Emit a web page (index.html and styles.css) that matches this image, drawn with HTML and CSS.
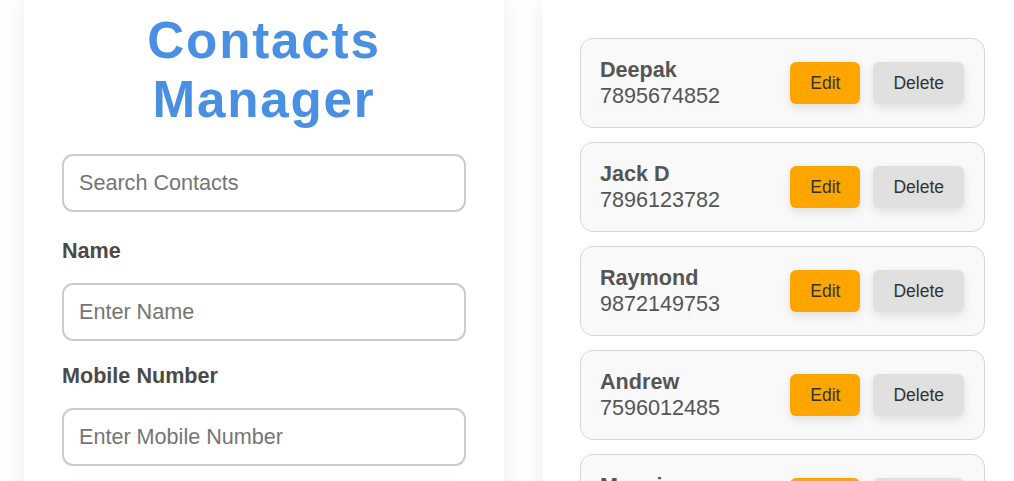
FILE: index.html
```html
<!DOCTYPE html>
<html lang="en">
<head>
<meta charset="UTF-8">
<title>Contacts Manager</title>
<link rel="stylesheet" href="styles.css">
</head>
<body>
<div class="layout">
  <section class="panel form-panel">
    <h1 class="title">Contacts Manager</h1>
    <input class="field search" type="text" placeholder="Search Contacts">
    <label class="label" for="name">Name</label>
    <input class="field" id="name" type="text" placeholder="Enter Name">
    <label class="label" for="mobile">Mobile Number</label>
    <input class="field" id="mobile" type="text" placeholder="Enter Mobile Number">
    <button class="add-btn">Add Contact</button>
  </section>
  <section class="panel list-panel">
    <div class="card">
      <div class="info"><div class="name">Deepak</div><div class="num">7895674852</div></div>
      <div class="actions"><button class="btn edit">Edit</button><button class="btn delete">Delete</button></div>
    </div>
    <div class="card">
      <div class="info"><div class="name">Jack D</div><div class="num">7896123782</div></div>
      <div class="actions"><button class="btn edit">Edit</button><button class="btn delete">Delete</button></div>
    </div>
    <div class="card">
      <div class="info"><div class="name">Raymond</div><div class="num">9872149753</div></div>
      <div class="actions"><button class="btn edit">Edit</button><button class="btn delete">Delete</button></div>
    </div>
    <div class="card">
      <div class="info"><div class="name">Andrew</div><div class="num">7596012485</div></div>
      <div class="actions"><button class="btn edit">Edit</button><button class="btn delete">Delete</button></div>
    </div>
    <div class="card">
      <div class="info"><div class="name">Manoj</div><div class="num">9876543210</div></div>
      <div class="actions"><button class="btn edit">Edit</button><button class="btn delete">Delete</button></div>
    </div>
  </section>
</div>
</body>
</html>
```

FILE: styles.css
```css
html, body {
  margin: 0;
  padding: 0;
  background: #ffffff;
  overflow: hidden;
  height: 100%;
}

body {
  font-family: "Liberation Sans", Arial, sans-serif;
}

.layout {
  display: flex;
  gap: 38px;
  padding-left: 24px;
  align-items: flex-start;
}

.panel {
  flex: 0 0 480px;
  width: 480px;
  box-sizing: border-box;
  background: #ffffff;
  box-shadow: 0 0 24px rgba(0, 0, 0, 0.08);
  min-height: 700px;
}

.form-panel {
  padding: 11px 38px 40px;
  display: flex;
  flex-direction: column;
}

.title {
  margin: 0 0 25px;
  font-size: 51.2px;
  font-weight: bold;
  line-height: normal;
  letter-spacing: 1.8px;
  color: #4a90e2;
  text-align: center;
}

.field {
  display: block;
  width: 100%;
  box-sizing: border-box;
  height: 58px;
  padding: 0 15px;
  border: 2px solid #cccccc;
  border-radius: 11px;
  font-family: "Liberation Sans", Arial, sans-serif;
  font-size: 21.6px;
  color: #333;
  background: #fff;
  margin: 0 0 22px;
  outline: none;
}

.field::placeholder {
  color: #757575;
}

.search {
  margin-bottom: 26px;
}

.label {
  display: block;
  font-size: 21.6px;
  font-weight: bold;
  color: #4a4a4a;
  line-height: normal;
  margin-bottom: 19px;
}

.add-btn {
  margin-top: 0;
  height: 54px;
  border: none;
  border-radius: 11px;
  background: #ffffff;
  box-shadow: 0 0 14px rgba(0, 0, 0, 0.07);
  font-family: "Liberation Sans", Arial, sans-serif;
  font-size: 20px;
}

.list-panel {
  padding: 38px;
}

.card {
  display: flex;
  justify-content: space-between;
  align-items: center;
  padding: 18px 20px 18px 19px;
  border: 1px solid #d6d6d6;
  border-radius: 13px;
  background: #f9f9f9;
  margin-bottom: 14px;
  margin-right: -1px;
}

.name {
  font-size: 21.6px;
  font-weight: bold;
  color: #555555;
  line-height: normal;
}

.num {
  font-size: 21.6px;
  color: #555555;
  line-height: normal;
}

.actions {
  display: flex;
  gap: 13px;
}

.btn {
  font-family: "Liberation Sans", Arial, sans-serif;
  font-size: 17.5px;
  line-height: normal;
  padding: 10.5px 20px;
  border: none;
  border-radius: 6px;
  color: #333333;
  box-shadow: 0 4px 10px rgba(0, 0, 0, 0.1);
  cursor: pointer;
}

.edit {
  background: #ffa500;
}

.delete {
  background: #e0e0e0;
}
```
